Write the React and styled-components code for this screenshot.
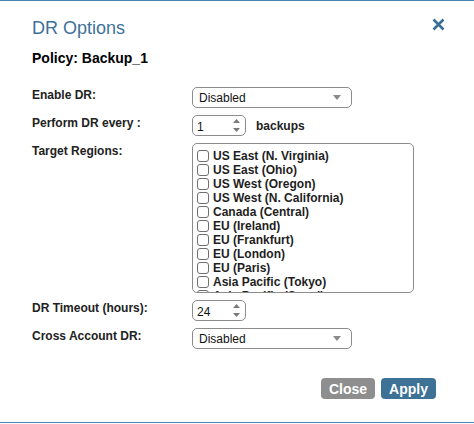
import styled, { createGlobalStyle } from 'styled-components';

const GlobalStyle = createGlobalStyle`
  html, body {
    margin: 0;
    padding: 0;
    background: #ffffff;
  }
  body {
    font-family: "Liberation Sans", Arial, Helvetica, sans-serif;
    color: #1a1a1a;
  }
`;

const regions = [
  'US East (N. Virginia)',
  'US East (Ohio)',
  'US West (Oregon)',
  'US West (N. California)',
  'Canada (Central)',
  'EU (Ireland)',
  'EU (Frankfurt)',
  'EU (London)',
  'EU (Paris)',
  'Asia Pacific (Tokyo)',
  'Asia Pacific (Seoul)',
];

const SelectBox = ({ value, width }) => (
  <SelectWrap $width={width}>
    <SelectText>{value}</SelectText>
    <svg width="8" height="5" viewBox="0 0 8 5">
      <path d="M0 0 H8 L4 5 Z" fill="#8a8a8a" />
    </svg>
  </SelectWrap>
);

const NumberBox = ({ value }) => (
  <NumberWrap>
    <NumberText>{value}</NumberText>
    <svg width="9" height="15" viewBox="0 0 9 15">
      <path d="M1 5 L4.5 1 L8 5 Z" fill="#7a7a7a" />
      <path d="M1 10 L4.5 14 L8 10 Z" fill="#7a7a7a" />
    </svg>
  </NumberWrap>
);

const App = () => {
  return (
    <>
      <GlobalStyle />
      <Dialog>
        <Header>
          <Title>DR Options</Title>
          <CloseIcon width="13" height="13" viewBox="0 0 13 13">
            <path d="M1.5 1.5 L11.5 11.5 M11.5 1.5 L1.5 11.5" stroke="#3a6e97" strokeWidth="2.6" />
          </CloseIcon>
        </Header>
        <Policy>Policy: Backup_1</Policy>
        <Form>
          <Label>Enable DR:</Label>
          <SelectBox value="Disabled" width={160} />

          <Label>Perform DR every :</Label>
          <Inline>
            <NumberBox value="1" />
            <Unit>backups</Unit>
          </Inline>

          <Label>Target Regions:</Label>
          <RegionList>
            {regions.map((r) => (
              <RegionItem key={r}>
                <Check />
                {r}
              </RegionItem>
            ))}
          </RegionList>

          <Label>DR Timeout (hours):</Label>
          <NumberBox value="24" />

          <Label>Cross Account DR:</Label>
          <SelectBox value="Disabled" width={160} />
        </Form>
        <Footer>
          <Button $variant="close">Close</Button>
          <Button>Apply</Button>
        </Footer>
      </Dialog>
    </>
  );
};

const Dialog = styled.div`
  box-sizing: border-box;
  height: 423px;
  border-top: 1px solid #4a85b2;
  border-bottom: 1px solid #4a85b2;
  padding: 17px 29px 0 32px;
`;

const Header = styled.div`
  display: flex;
  justify-content: space-between;
  align-items: flex-start;
  height: 21px;
`;

const Title = styled.h2`
  margin: 0;
  font-size: 18px;
  font-weight: 400;
  line-height: 21px;
  color: #3d7199;
`;

const CloseIcon = styled.svg`
  display: block;
  margin-top: 0;
`;

const Policy = styled.div`
  margin-top: 11px;
  font-size: 14px;
  font-weight: 700;
  line-height: 16px;
  color: #000;
`;

const Form = styled.div`
  display: grid;
  grid-template-columns: 160px auto;
  row-gap: 7px;
  margin-top: 21px;
  align-items: start;
`;

const Label = styled.div`
  font-size: 12px;
  font-weight: 700;
  line-height: 14px;
  padding-top: 1px;
  color: #222;
`;

const SelectWrap = styled.div`
  box-sizing: border-box;
  width: ${(p) => p.$width}px;
  height: 21px;
  border: 1px solid #8c8c8c;
  border-radius: 5px;
  display: flex;
  align-items: center;
  justify-content: space-between;
  padding: 0 10px 0 6px;
  background: #fff;
`;

const SelectText = styled.span`
  font-size: 12px;
  color: #111;
`;

const Inline = styled.div`
  display: flex;
  align-items: center;
  gap: 10px;
  height: 21px;
`;

const NumberWrap = styled.div`
  box-sizing: border-box;
  width: 54px;
  height: 21px;
  border: 1px solid #8c8c8c;
  border-radius: 5px;
  display: flex;
  align-items: center;
  justify-content: space-between;
  padding: 0 4px 0 4px;
  background: #fff;
`;

const NumberText = styled.span`
  font-size: 12px;
  color: #111;
  padding-top: 2px;
`;

const Unit = styled.span`
  font-size: 12px;
  font-weight: 700;
  color: #222;
`;

const RegionList = styled.div`
  box-sizing: border-box;
  width: 222px;
  height: 150px;
  border: 1px solid #8c8c8c;
  border-radius: 5px;
  overflow: hidden;
  padding: 5px 0 0 4px;
`;

const RegionItem = styled.div`
  display: flex;
  align-items: center;
  gap: 4px;
  height: 14px;
  font-size: 12px;
  font-weight: 700;
  color: #1e1e1e;
  white-space: nowrap;
`;

const Check = styled.span`
  box-sizing: border-box;
  width: 12px;
  height: 12px;
  border: 1px solid #6e6e6e;
  border-radius: 3px;
  background: #fff;
  flex-shrink: 0;
`;

const Footer = styled.div`
  display: flex;
  justify-content: flex-end;
  gap: 6px;
  margin-top: 29px;
  padding-right: 9px;
`;

const Button = styled.button`
  height: 21px;
  padding: 0 8px;
  border: none;
  border-radius: 4px;
  font-family: "Liberation Sans", Arial, sans-serif;
  font-size: 14px;
  font-weight: 700;
  color: #fff;
  background: ${(p) => (p.$variant === 'close' ? '#8e8e8e' : '#3d7196')};
  cursor: pointer;
`;

export default App;
